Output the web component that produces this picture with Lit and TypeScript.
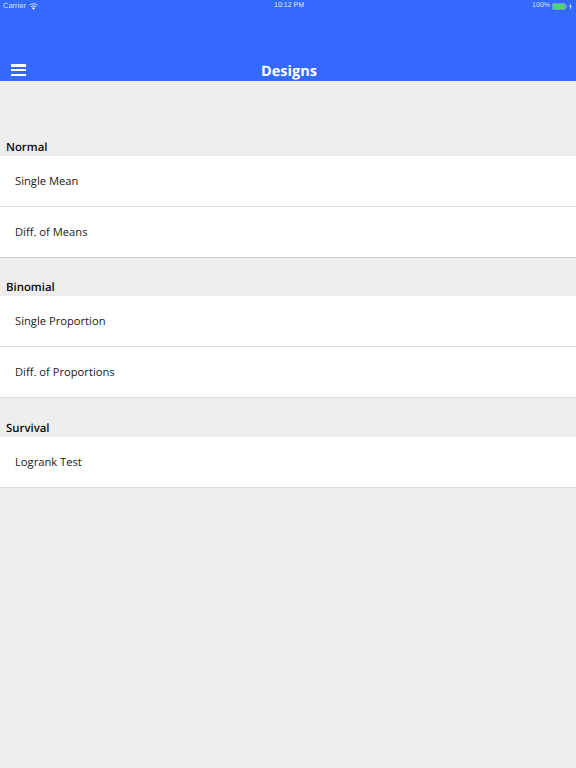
import { LitElement, html, css } from "lit";
import { customElement } from "lit/decorators.js";

const sections = [
  { title: "Normal", items: ["Single Mean", "Diff. of Means"], dark: true },
  { title: "Binomial", items: ["Single Proportion", "Diff. of Proportions"], dark: false },
  { title: "Survival", items: ["Logrank Test"], dark: false },
];

@customElement("app-root")
export class AppRoot extends LitElement {
  static styles = css`
    :host {
      display: block;
      width: 576px;
      height: 768px;
      overflow: hidden;
      background: #eeeeee;
      font-family: "Open Sans", sans-serif;
      text-rendering: geometricPrecision;
    }
    .header {
      height: 81px;
      box-sizing: border-box;
      background: #3369ff;
      color: #fff;
      display: flex;
      flex-direction: column;
    }
    .status {
      height: 12px;
      padding: 0 4px 0 3px;
      display: grid;
      grid-template-columns: 1fr auto 1fr;
      align-items: center;
      font-family: "Liberation Sans", sans-serif;
      font-size: 7.5px;
      line-height: 12px;
      color: rgba(255, 255, 255, 0.8);
    }
    .status .time {
      font-size: 7px;
      color: rgba(255, 255, 255, 0.9);
      transform: translateX(1.5px);
    }
    .left,
    .right {
      display: flex;
      align-items: center;
      gap: 3px;
    }
    .right {
      justify-content: flex-end;
      gap: 2px;
      font-size: 7px;
    }
    .nav {
      flex: 1;
      display: grid;
      grid-template-columns: 1fr auto 1fr;
      align-items: end;
      padding: 0 11px;
    }
    .menu {
      display: flex;
      flex-direction: column;
      gap: 2.25px;
      width: 15px;
      padding-bottom: 5px;
    }
    .menu span {
      height: 2.5px;
      background: #fff;
    }
    .title {
      font-size: 14.5px;
      font-weight: 700;
      line-height: 19px;
      transform: translateX(1px);
    }
    .list {
      padding-top: 57px;
    }
    .sect {
      height: 18px;
      box-sizing: border-box;
      padding-left: 6px;
      font-size: 11.4px;
      font-weight: 600;
      line-height: 20px;
      color: #0a0a0a;
    }
    .row {
      height: 51px;
      box-sizing: border-box;
      background: #fff;
      border-bottom: 1px solid #dcdcdc;
      padding: 1px 15px 0;
      display: flex;
      align-items: center;
      font-size: 11.2px;
      color: #1c1c1c;
    }
    .group + .group {
      padding-top: 20.4px;
    }
    .group.dark .row:last-child {
      border-bottom-color: #cccccc;
    }
  `;

  render() {
    return html`
      <div class="header">
        <div class="status">
          <div class="left">
            <span>Carrier</span>
            <svg width="9" height="7" viewBox="0 0 18 14" fill="none" stroke="#fff" stroke-opacity="0.85">
              <path d="M1 4.5C6 0.5 12 0.5 17 4.5" stroke-width="2" />
              <path d="M4 7.5C7 5 11 5 14 7.5" stroke-width="2" />
              <path d="M6.5 10C8 9 10 9 11.5 10L9 13Z" fill="#fff" stroke-width="1" />
            </svg>
          </div>
          <span class="time">10:12 PM</span>
          <div class="right">
            <span>100%</span>
            <svg width="15" height="7" viewBox="0 0 15 7">
              <rect x="0.25" y="0.25" width="13" height="6.5" rx="1.4" fill="#fff" fill-opacity="0.2" stroke="#fff" stroke-opacity="0.5" stroke-width="0.5" />
              <rect x="1" y="1" width="11.5" height="5" rx="0.8" fill="#4cd964" />
              <rect x="13.8" y="2.3" width="1" height="2.4" rx="0.4" fill="#fff" fill-opacity="0.5" />
            </svg>
            <svg width="3" height="7" viewBox="0 0 3 7">
              <path d="M1.8 0L0.2 3.8H1.3L1.1 7L2.8 2.9H1.6Z" fill="#fff" fill-opacity="0.85" />
            </svg>
          </div>
        </div>
        <div class="nav">
          <div class="menu"><span></span><span></span><span></span></div>
          <div class="title">Designs</div>
          <div></div>
        </div>
      </div>
      <div class="list">
        ${sections.map(
          (s) => html`
            <div class="group ${s.dark ? "dark" : ""}">
              <div class="sect">${s.title}</div>
              ${s.items.map((i) => html`<div class="row">${i}</div>`)}
            </div>
          `
        )}
      </div>
    `;
  }
}
